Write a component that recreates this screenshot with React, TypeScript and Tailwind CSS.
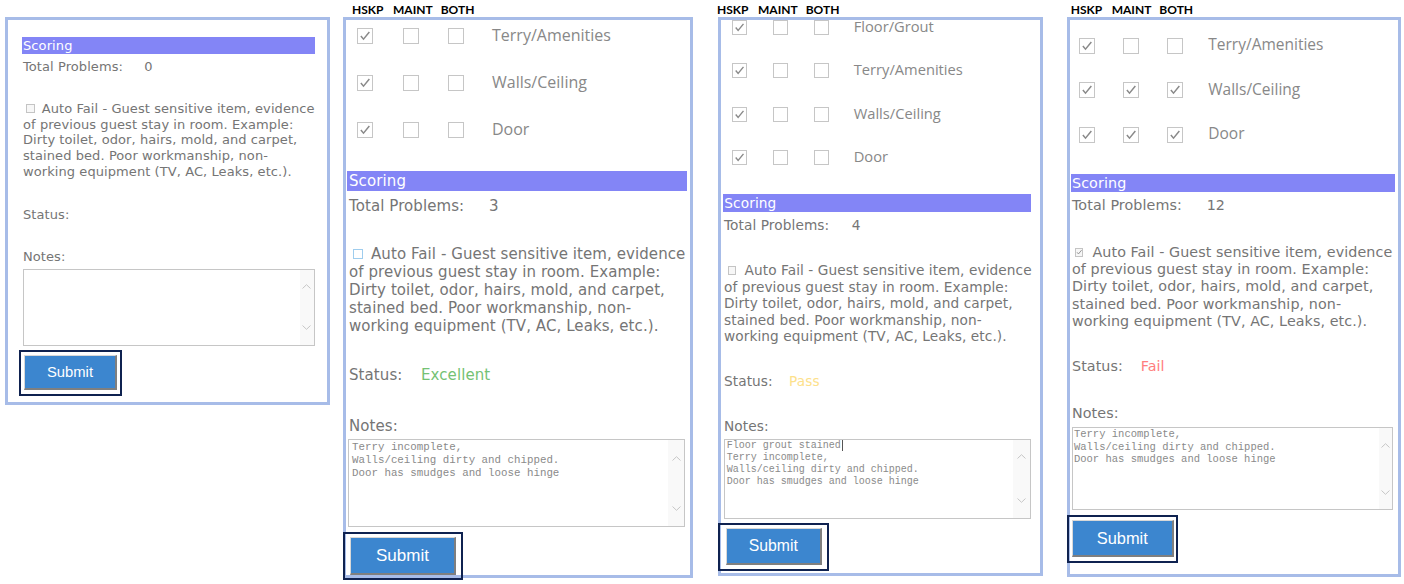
type Row = { label: string; checks: [boolean, boolean, boolean] }

type PanelCfg = {
  col: string
  header: string | null
  box: string
  rows: Row[]
  rowsWrap: string
  rowCb: string
  cbGap: string
  label: string
  bar: string
  txt: string
  tp: string
  tpLabel: string
  total: string
  af: string
  afCb: string
  afState: "gray" | "blue" | "checked"
  status: string
  statusLabel: string
  statusValue: string
  statusColor: string
  notes: string
  ta: string
  taText: string
  taLines: string[]
  caret?: boolean
  strip: string
  btnWrap: string
  btn: string
}

const notes = ["Terry incomplete,", "Walls/ceiling dirty and chipped.", "Door has smudges and loose hinge"]

const autoFail = [
  "of previous guest stay in room. Example:",
  "Dirty toilet, odor, hairs, mold, and carpet,",
  "stained bed. Poor workmanship, non-",
  "working equipment (TV, AC, Leaks, etc.).",
]

const panels: PanelCfg[] = [
  {
    col: "ml-[5px]",
    header: null,
    box: "w-[325px] h-[388px] pl-[14px] pr-[12px]",
    rows: [],
    rowsWrap: "",
    rowCb: "",
    cbGap: "",
    label: "",
    bar: "mt-[16.7px] h-[17px] text-[13px] leading-[17px] pl-[1px]",
    txt: "pl-[1px] text-[13px] leading-[15.6px]",
    tp: "mt-[5.2px]",
    tpLabel: "w-[121.3px]",
    total: "0",
    af: "mt-[26.7px]",
    afCb: "w-[9px] h-[9px] ml-[3px] mr-[6.7px]",
    afState: "gray",
    status: "mt-[28px]",
    statusLabel: "w-[62px]",
    statusValue: "",
    statusColor: "text-[#74c274]",
    notes: "mt-[26.4px]",
    ta: "mt-[4.2px] ml-[0.7px] w-[292px] h-[76.7px]",
    taText: "text-[9.4px] leading-[11.3px] pl-[2px] pt-[1px]",
    taLines: [],
    strip: "w-[14px] py-[14.5px]",
    btnWrap: "mt-[4.3px] -ml-[3px] w-[103px] h-[46px]",
    btn: "w-[93px] h-[35px] text-[14.8px]",
  },
  {
    col: "ml-[13px]",
    header: "pl-[9px]",
    box: "w-[350px] h-[561px] pl-[1px] pr-[3px]",
    rows: [
      { label: "Terry/Amenities", checks: [true, false, false] },
      { label: "Walls/Ceiling", checks: [true, false, false] },
      { label: "Door", checks: [true, false, false] },
    ],
    rowsWrap: "pt-[8px] pl-[10px] gap-y-[31px]",
    rowCb: "w-[16px] h-[16px]",
    cbGap: "gap-x-[29.5px]",
    label: "ml-[28px] text-[16px]",
    bar: "mt-[33px] h-[20px] text-[15px] leading-[20px] pl-[2px]",
    txt: "pl-[2px] text-[15px] leading-[18px]",
    tp: "mt-[6px]",
    tpLabel: "w-[140px]",
    total: "3",
    af: "mt-[30px]",
    afCb: "w-[10px] h-[10px] ml-[4px] mr-[8px]",
    afState: "blue",
    status: "mt-[31px]",
    statusLabel: "w-[72px]",
    statusValue: "Excellent",
    statusColor: "text-[#74c274]",
    notes: "mt-[33px]",
    ta: "mt-[4px] ml-[1px] w-[337px] h-[88px]",
    taText: "text-[10.8px] leading-[13px] pl-[3px] pt-[1.2px]",
    taLines: notes,
    strip: "w-[16px] py-[15.5px]",
    btnWrap: "mt-[5px] -ml-[4px] w-[120px] h-[48px]",
    btn: "w-[106px] h-[38px] text-[17px]",
  },
  {
    col: "ml-[25px]",
    header: "-ml-[1px]",
    box: "w-[325px] h-[559px] pl-[2.3px] pr-[9px]",
    rows: [
      { label: "Floor/Grout", checks: [true, false, false] },
      { label: "Terry/Amenities", checks: [true, false, false] },
      { label: "Walls/Ceiling", checks: [true, false, false] },
      { label: "Door", checks: [true, false, false] },
    ],
    rowsWrap: "pt-[0px] pl-[8.4px] gap-y-[28.3px]",
    rowCb: "w-[15px] h-[15px]",
    cbGap: "gap-x-[26px]",
    label: "ml-[25px] text-[14.7px]",
    bar: "mt-[29.1px] h-[18px] text-[13.7px] leading-[18px] pl-[1px]",
    txt: "pl-[0.7px] text-[13.7px] leading-[16.5px]",
    tp: "mt-[5px]",
    tpLabel: "w-[127.7px]",
    total: "4",
    af: "mt-[28.9px]",
    afCb: "w-[8.5px] h-[8.5px] ml-[4px] mr-[8px]",
    afState: "gray",
    status: "mt-[27.9px]",
    statusLabel: "w-[65px]",
    statusValue: "Pass",
    statusColor: "text-[#fde18b]",
    notes: "mt-[29.2px]",
    ta: "mt-[4.3px] ml-[0.7px] w-[306.7px] h-[79.4px]",
    taText: "text-[10px] leading-[11.7px] pl-[1.7px] pt-[0.2px]",
    taLines: ["Floor grout stained", ...notes],
    caret: true,
    strip: "w-[17px] py-[14.2px]",
    btnWrap: "mt-[4px] -ml-[5px] w-[111px] h-[48px]",
    btn: "w-[96px] h-[36.7px] text-[15.75px]",
  },
  {
    col: "ml-[24.3px]",
    header: "pl-[3.4px]",
    box: "w-[334px] h-[560px] pl-[0.7px] pr-[3.3px]",
    rows: [
      { label: "Terry/Amenities", checks: [true, false, false] },
      { label: "Walls/Ceiling", checks: [true, true, true] },
      { label: "Door", checks: [true, true, true] },
    ],
    rowsWrap: "pt-[17.7px] pl-[8.3px] gap-y-[28.7px]",
    rowCb: "w-[16px] h-[16px]",
    cbGap: "gap-x-[28px]",
    label: "ml-[25px] text-[15.5px]",
    bar: "mt-[30.6px] h-[18.4px] text-[14.3px] leading-[18.4px] pl-[1px]",
    txt: "pl-[1px] text-[14.3px] leading-[17.2px]",
    tp: "mt-[5.4px]",
    tpLabel: "w-[134.7px]",
    total: "12",
    af: "mt-[29.4px]",
    afCb: "w-[8.5px] h-[8.5px] ml-[3px] mr-[9px]",
    afState: "checked",
    status: "mt-[28.4px]",
    statusLabel: "w-[68.7px]",
    statusValue: "Fail",
    statusColor: "text-[#ff7e7e]",
    notes: "mt-[29.4px]",
    ta: "mt-[4.8px] ml-[0.7px] w-[321.6px] h-[83.3px]",
    taText: "text-[10.5px] leading-[12.6px] pl-[1.3px] pt-[0px]",
    taLines: notes,
    strip: "w-[13px] py-[14.8px]",
    btnWrap: "mt-[4.3px] -ml-[3.7px] w-[111px] h-[48.4px]",
    btn: "w-[101.6px] h-[37.3px] text-[16.4px]",
  },
]

function Tick({ width = 2 }: { width?: number }) {
  return (
    <svg viewBox="0 0 16 16" className="h-full w-full">
      <polyline points="2.5,8 6,12.2 13.8,2.8" fill="none" stroke="#8a8a8a" strokeWidth={width} />
    </svg>
  )
}

function Chevron({ up }: { up?: boolean }) {
  return (
    <svg width="9" height="5" viewBox="0 0 9 5" className="mx-auto">
      <polyline points={up ? "0.5,4.5 4.5,0.7 8.5,4.5" : "0.5,0.5 4.5,4.3 8.5,0.5"} fill="none" stroke="#c6c6c6" strokeWidth="1" />
    </svg>
  )
}

function Panel({ p }: { p: PanelCfg }) {
  const afBox =
    p.afState === "blue"
      ? "border-[#9fcdee] bg-white"
      : "border-[#c4c4c4] bg-[#f7f7f7]"

  return (
    <div className={`shrink-0 ${p.col}`}>
      <div className={`h-[17px] pt-[3px] leading-[14px] font-['Lato',sans-serif] font-bold text-[12px] text-black whitespace-nowrap ${p.header ?? ""}`}>
        {p.header !== null && (
          <>
            <span>HSKP</span>
            <span className="ml-[9.5px]">MAINT</span>
            <span className="ml-[8px]">BOTH</span>
          </>
        )}
      </div>

      <div className={`border-[3px] border-[#a7bce8] bg-white text-[#757575] ${p.box}`}>
        {p.rows.length > 0 && (
          <div className={`flex flex-col ${p.rowsWrap}`}>
            {p.rows.map((r) => (
              <div key={r.label} className="flex items-center">
                <div className={`flex ${p.cbGap}`}>
                  {r.checks.map((c, i) => (
                    <div key={i} className={`border border-[#c6c6c6] bg-white p-[1px] ${p.rowCb}`}>
                      {c && <Tick />}
                    </div>
                  ))}
                </div>
                <span className={`font-['Open_Sans',sans-serif] text-[#888888] leading-none -mt-[2px] ${p.label}`}>{r.label}</span>
              </div>
            ))}
          </div>
        )}

        <div className={`bg-[#8385f6] text-white font-['DejaVu_Sans',Verdana,sans-serif] tracking-[0.1px] ${p.bar}`}>Scoring</div>

        <div className={`font-['DejaVu_Sans',Verdana,sans-serif] tracking-[0.08px] ${p.txt}`}>
          <div className={`flex ${p.tp}`}>
            <span className={p.tpLabel}>Total Problems:</span>
            <span>{p.total}</span>
          </div>

          <div className={`whitespace-nowrap ${p.af}`}>
            <div className="flex items-center">
              <span className={`inline-block shrink-0 border ${afBox} ${p.afCb}`}>
                {p.afState === "checked" && <Tick width={2.2} />}
              </span>
              <span>Auto Fail - Guest sensitive item, evidence</span>
            </div>
            {autoFail.map((l) => (
              <div key={l}>{l}</div>
            ))}
          </div>

          <div className={`flex ${p.status}`}>
            <span className={p.statusLabel}>Status:</span>
            <span className={p.statusColor}>{p.statusValue}</span>
          </div>

          <div className={p.notes}>Notes:</div>
        </div>

        <div className={`relative border border-[#c6c6c6] bg-white overflow-hidden ${p.ta}`}>
          <div className={`font-['Liberation_Mono','Courier_New',monospace] text-[#8a8a8a] whitespace-pre ${p.taText}`}>
            {p.taLines.map((l, i) => (
              <div key={i}>
                {l}
                {p.caret && i === 0 && <span className="inline-block w-[1px] h-[11px] bg-[#555] align-middle ml-[1px]" />}
              </div>
            ))}
          </div>
          <div className={`absolute right-0 top-0 bottom-0 flex flex-col justify-between bg-[#f9f9f9] ${p.strip}`}>
            <Chevron up />
            <Chevron />
          </div>
        </div>

        <div className={`relative flex items-center justify-center border-2 border-[#0f2250] ${p.btnWrap}`}>
          <button
            className={`flex items-center justify-center bg-[#3c86cf] text-white font-['Liberation_Sans',Arial,sans-serif] border-t border-l border-t-[#d8d8d8] border-l-[#d8d8d8] border-r-2 border-b-2 border-r-[#7f7f7f] border-b-[#7f7f7f] ${p.btn}`}
          >
            Submit
          </button>
        </div>
      </div>
    </div>
  )
}

export default function App() {
  return (
    <div className="flex items-start w-[1404px] h-[584px] bg-white overflow-hidden">
      {panels.map((p, i) => (
        <Panel key={i} p={p} />
      ))}
    </div>
  )
}
